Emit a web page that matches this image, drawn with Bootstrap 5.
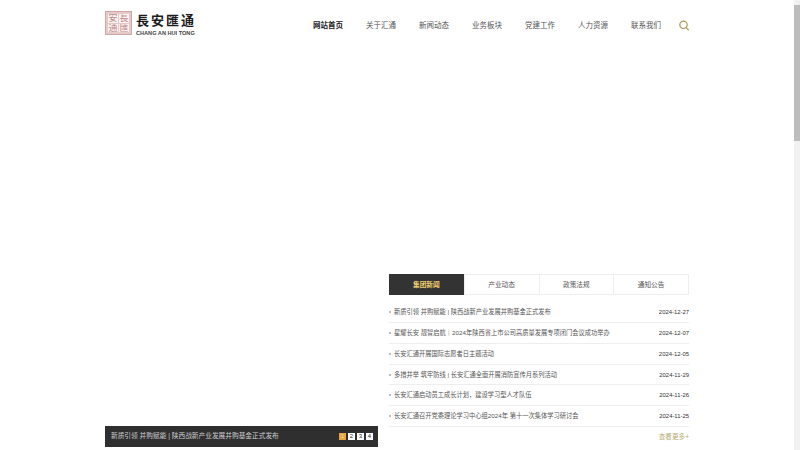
<!DOCTYPE html>
<html lang="zh-CN">
<head>
    <meta charset="UTF-8">
    <meta name="viewport" content="width=device-width, initial-scale=1.0">
    <title>长安汇通</title>
    <link href="https://cdn.jsdelivr.net/npm/bootstrap@5.3.0/dist/css/bootstrap.min.css" rel="stylesheet">
    <style>
        html, body { height: 450px; overflow: hidden; }
        body {
            background: #fff;
            color: #555;
            font-family: "Liberation Sans", "Noto Sans CJK SC", sans-serif;
        }
        .site-wrap { width: 584px; margin-left: 105px; }
        .site-head { height: 50px; }
        .seal {
            display: grid;
            grid-template-columns: 1fr 1fr;
            grid-template-rows: 1fr 1fr;
            width: 27px;
            height: 24px;
            margin-top: -2px;
            padding: 2px;
            gap: 1px;
            background: #e6c9c9;
            border: 1px solid #cfa5a5;
        }
        .seal span {
            background: #fbf3f3;
            color: #c08a8a;
            font-size: 9px;
            line-height: 9px;
            text-align: center;
            overflow: hidden;
        }
        .logo-cn {
            color: #1c1c1c;
            font-size: 13px;
            font-weight: 700;
            line-height: 15px;
            letter-spacing: 2px;
            white-space: nowrap;
        }
        .logo-en {
            color: #444;
            font-size: 5.6px;
            font-weight: 700;
            line-height: 7px;
            margin-top: 2px;
            white-space: nowrap;
        }
        .main-nav { gap: 23px; margin-right: 28px; margin-top: 1px; }
        .main-nav a {
            color: #555;
            font-size: 7.5px;
            line-height: 10px;
            padding: 0;
            text-decoration: none;
        }
        .main-nav a.active { color: #222; font-weight: 700; }
        .search-btn { position: absolute; right: 0; top: 20px; }
        .site-main { height: 397px; gap: 11px; }
        .slide-box { width: 273px; height: 21px; padding: 0 6px; background: #2f2f2f; }
        .slide-title { color: #ccc; font-size: 6.7px; }
        .dots { gap: 2px; margin-right: -1px; }
        .dots span {
            width: 7px;
            height: 7px;
            background: #fff;
            color: #222;
            font-size: 6px;
            line-height: 7px;
            text-align: center;
        }
        .dots span.on { background: #e7a543; color: #f6d9a8; }
        .news-box { width: 300px; }
        .news-tabs { height: 21px; border: 1px solid #eee; }
        .news-tabs div {
            width: 75px;
            border-left: 1px solid #eee;
            color: #555;
            font-size: 6.7px;
            line-height: 19px;
            text-align: center;
        }
        .news-tabs div:first-child {
            margin: -1px 0 -1px -1px;
            line-height: 21px;
            background: #333;
            border-left: 0;
            color: #efd06e;
            font-weight: 700;
        }
        .news-list { margin: 7px 0 0; }
        .news-list li {
            height: 20.8px;
            border-bottom: 1px solid #eee;
            font-size: 6.25px;
            line-height: 20px;
        }
        .news-list li i {
            width: 2px;
            height: 2px;
            margin-right: 3px;
            background: #bbb;
        }
        .news-date { color: #333; font-size: 5.9px; }
        .more-link {
            display: block;
            color: #b8ad72;
            font-size: 6.6px;
            line-height: 20px;
            text-decoration: none;
        }
        .fake-scroll {
            position: fixed;
            top: 0;
            right: 0;
            width: 6px;
            height: 450px;
            background: #f1f1f1;
        }
        .fake-scroll div { height: 136px; margin-top: 5px; background: #bdbdbd; }
    </style>
</head>
<body>
    <div class="site-wrap">
        <header class="site-head position-relative d-flex align-items-center justify-content-between">
            <a class="d-flex gap-1 text-decoration-none" href="#">
                <div class="seal">
                    <span>安</span><span>長</span><span>通</span><span>匯</span>
                </div>
                <div>
                    <div class="logo-cn">長安匯通</div>
                    <div class="logo-en">CHANG AN HUI TONG</div>
                </div>
            </a>
            <nav class="nav main-nav">
                <a class="nav-link active" href="#">网站首页</a>
                <a class="nav-link" href="#">关于汇通</a>
                <a class="nav-link" href="#">新闻动态</a>
                <a class="nav-link" href="#">业务板块</a>
                <a class="nav-link" href="#">党建工作</a>
                <a class="nav-link" href="#">人力资源</a>
                <a class="nav-link" href="#">联系我们</a>
            </nav>
            <svg class="search-btn" width="10" height="11" viewBox="0 0 10 11" fill="none" stroke="#a89a55" stroke-width="1.2">
                <circle cx="4.5" cy="4.8" r="3.7"/>
                <path d="M7.2 7.6 9.6 10.3"/>
            </svg>
        </header>

        <main class="site-main d-flex align-items-end">
            <div class="slide-box d-flex align-items-center justify-content-between">
                <span class="slide-title">新质引领 并购赋能 | 陕西战新产业发展并购基金正式发布</span>
                <div class="dots d-flex">
                    <span class="on">1</span><span>2</span><span>3</span><span>4</span>
                </div>
            </div>
            <div class="news-box">
                <div class="news-tabs d-flex">
                    <div>集团新闻</div>
                    <div>产业动态</div>
                    <div>政策法规</div>
                    <div>通知公告</div>
                </div>
                <ul class="news-list list-unstyled">
                    <li class="d-flex align-items-center justify-content-between"><span class="d-flex align-items-center"><i></i>新质引领 并购赋能 | 陕西战新产业发展并购基金正式发布</span><span class="news-date">2024-12-27</span></li>
                    <li class="d-flex align-items-center justify-content-between"><span class="d-flex align-items-center"><i></i>星耀长安 靓智启航｜2024年陕西省上市公司高质量发展专项闭门会议成功举办</span><span class="news-date">2024-12-07</span></li>
                    <li class="d-flex align-items-center justify-content-between"><span class="d-flex align-items-center"><i></i>长安汇通开展国际志愿者日主题活动</span><span class="news-date">2024-12-05</span></li>
                    <li class="d-flex align-items-center justify-content-between"><span class="d-flex align-items-center"><i></i>多措并举 筑牢防线 | 长安汇通全面开展消防宣传月系列活动</span><span class="news-date">2024-11-29</span></li>
                    <li class="d-flex align-items-center justify-content-between"><span class="d-flex align-items-center"><i></i>长安汇通启动员工成长计划，建设学习型人才队伍</span><span class="news-date">2024-11-26</span></li>
                    <li class="d-flex align-items-center justify-content-between"><span class="d-flex align-items-center"><i></i>长安汇通召开党委理论学习中心组2024年 第十一次集体学习研讨会</span><span class="news-date">2024-11-25</span></li>
                </ul>
                <div class="text-end"><a class="more-link" href="#">查看更多+</a></div>
            </div>
        </main>
    </div>
    <div class="fake-scroll"><div></div></div>
    <script src="https://cdn.jsdelivr.net/npm/bootstrap@5.3.0/dist/js/bootstrap.bundle.min.js"></script>
</body>
</html>
